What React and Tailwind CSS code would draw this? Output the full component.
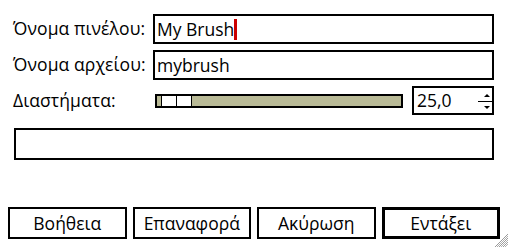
import React from "react";

export default function App() {
  return (
    <div
      className="relative w-[508px] h-[247px] bg-white text-black overflow-hidden"
      style={{ fontFamily: '"Open Sans", "Noto Sans", sans-serif' }}
    >
      <div className="flex flex-col pt-[14px] pl-[13px] pr-[14px]">
        <div className="grid grid-cols-[140px_1fr] gap-y-[6px] items-center">
          <div className="text-[17.5px] leading-none tracking-[0.1px]">Όνομα πινέλου:</div>
          <div className="h-[30px] border-2 border-black flex items-center pl-[2px] text-[17.5px]">
            <span>My Brush</span>
            <span className="inline-block w-[3px] h-[21px] bg-[#cc0000]" />
          </div>
          <div className="text-[17.5px] leading-none tracking-[0.1px]">Όνομα αρχείου:</div>
          <div className="h-[30px] border-2 border-black flex items-center pl-[2px] text-[17.5px]">
            <span>mybrush</span>
          </div>
          <div className="text-[17.5px] leading-none tracking-[0.1px]">Διαστήματα:</div>
          <div className="flex items-center gap-[9px]">
            <div className="flex-1 ml-[2px] h-[14px] border-2 border-black bg-[#b9ba96] flex">
              <div className="w-[4px]" />
              <div className="w-[31px] bg-white border-x border-black flex">
                <div className="flex-1" />
                <div className="w-px bg-black" />
                <div className="flex-1" />
              </div>
            </div>
            <div className="w-[82px] h-[29px] border-2 border-black flex items-center pl-[3px] text-[17.5px]">
              <span className="flex-1">25,0</span>
              <svg width="14" height="24" viewBox="0 0 14 24">
                <polygon points="9,5 12,8 6,8" fill="#000" />
                <line x1="0" y1="12.5" x2="14" y2="12.5" stroke="#000" strokeWidth="1" />
                <polygon points="6,17 12,17 9,20" fill="#000" />
              </svg>
            </div>
          </div>
        </div>
        <div className="mt-[13px] ml-[1px] h-[32px] border-2 border-black" />
      </div>
      <div className="grid grid-cols-4 gap-[6px] px-[8px] mt-[47px]">
        <button className="h-[32px] border-2 border-black text-[17.5px] bg-white">Βοήθεια</button>
        <button className="h-[32px] border-2 border-black text-[17.5px] bg-white">Επαναφορά</button>
        <button className="h-[32px] border-2 border-black text-[17.5px] bg-white">Ακύρωση</button>
        <button className="h-[32px] border-[3px] border-black text-[17.5px] bg-white">Εντάξει</button>
      </div>
      <svg
        className="absolute right-0 bottom-0"
        width="14"
        height="14"
        viewBox="0 0 14 14"
      >
        <line x1="14" y1="1" x2="1" y2="14" stroke="#9a9a9a" strokeWidth="1" />
        <line x1="14" y1="3" x2="3" y2="14" stroke="#b0b0b0" strokeWidth="1" />
        <line x1="14" y1="5" x2="5" y2="14" stroke="#9a9a9a" strokeWidth="1" />
        <line x1="14" y1="7" x2="7" y2="14" stroke="#b0b0b0" strokeWidth="1" />
        <line x1="14" y1="9" x2="9" y2="14" stroke="#9a9a9a" strokeWidth="1" />
        <line x1="14" y1="11" x2="11" y2="14" stroke="#b0b0b0" strokeWidth="1" />
      </svg>
    </div>
  );
}
